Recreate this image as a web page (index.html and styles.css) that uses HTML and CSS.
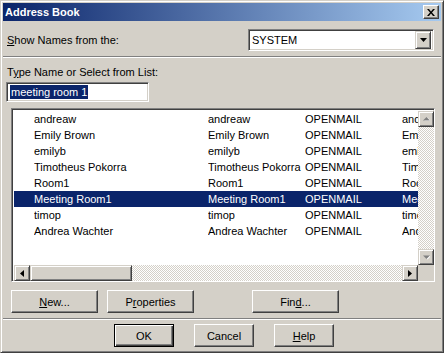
FILE: index.html
```html
<!DOCTYPE html>
<html lang="en">
<head>
    <meta charset="UTF-8">
    <title>Address Book</title>
    <link rel="stylesheet" href="styles.css">
</head>
<body>
    <div class="window">
        <div class="titlebar">
            <span class="title">Address Book</span>
            <span class="close-btn">
                <svg width="8" height="7" viewBox="0 0 8 7"><path d="M0 0h2l2 2.4L6 0h2L5 3.5 8 7H6L4 4.6 2 7H0l3-3.5z" fill="#000"/></svg>
            </span>
        </div>
        <div class="content">
            <div class="source-row">
                <span class="label"><u>S</u>how Names from the:</span>
                <div class="combo">
                    <span class="combo-value">SYSTEM</span>
                    <span class="combo-btn raised">
                        <svg width="7" height="4" viewBox="0 0 7 4"><path d="M0 0h7L3.5 4z" fill="#000"/></svg>
                    </span>
                </div>
            </div>
            <div class="etched"></div>
            <div class="search">
                <span class="label">T<u>y</u>pe Name or Select from List:</span>
                <div class="textbox sunken"><span class="sel">meeting room 1</span></div>
            </div>
            <div class="listbox sunken">
                <div class="rows">
                    <div class="row"><span>andreaw</span><span>andreaw</span><span>OPENMAIL</span><span>andreaw</span></div>
                    <div class="row"><span>Emily Brown</span><span>Emily Brown</span><span>OPENMAIL</span><span>Emily Brown</span></div>
                    <div class="row"><span>emilyb</span><span>emilyb</span><span>OPENMAIL</span><span>emilyb</span></div>
                    <div class="row"><span>Timotheus Pokorra</span><span>Timotheus Pokorra</span><span>OPENMAIL</span><span>Timotheus Pokorra</span></div>
                    <div class="row"><span>Room1</span><span>Room1</span><span>OPENMAIL</span><span>Room1</span></div>
                    <div class="row selected"><span>Meeting Room1</span><span>Meeting Room1</span><span>OPENMAIL</span><span>Meeting Room1</span></div>
                    <div class="row"><span>timop</span><span>timop</span><span>OPENMAIL</span><span>timop</span></div>
                    <div class="row"><span>Andrea Wachter</span><span>Andrea Wachter</span><span>OPENMAIL</span><span>Andrea Wachter</span></div>
                </div>
                <div class="vscroll">
                    <span class="arrow raised">
                        <svg width="7" height="5" viewBox="0 0 7 5"><path d="M1 4h7L4.5 0.5z" fill="#fff"/><path d="M0 3.5h7L3.5 0z" fill="#808080"/></svg>
                    </span>
                    <span class="track"></span>
                    <span class="arrow raised">
                        <svg width="7" height="5" viewBox="0 0 7 5"><path d="M1 1h7L4.5 4.5z" fill="#fff"/><path d="M0 0.5h7L3.5 4z" fill="#808080"/></svg>
                    </span>
                </div>
                <div class="hscroll">
                    <span class="arrow raised">
                        <svg width="4" height="7" viewBox="0 0 4 7"><path d="M4 0v7L0 3.5z" fill="#000"/></svg>
                    </span>
                    <span class="thumb raised"></span>
                    <span class="track"></span>
                    <span class="arrow raised">
                        <svg width="4" height="7" viewBox="0 0 4 7"><path d="M0 0v7L4 3.5z" fill="#000"/></svg>
                    </span>
                </div>
                <div class="corner"></div>
            </div>
            <div class="actions">
                <button class="btn btn-wide"><u>N</u>ew...</button>
                <button class="btn btn-wide">P<u>r</u>operties</button>
                <button class="btn btn-wide btn-find">Fin<u>d</u>...</button>
            </div>
            <div class="etched"></div>
            <div class="dialog-buttons">
                <button class="btn btn-default">OK</button>
                <button class="btn">Cancel</button>
                <button class="btn"><u>H</u>elp</button>
            </div>
        </div>
    </div>
</body>
</html>
```

FILE: styles.css
```css
body {
    margin: 0;
    font-family: 'Liberation Sans', Arial, sans-serif;
    font-size: 11px;
    color: #000;
    background-color: #d4d0c8;
}

.window {
    width: 444px;
    height: 353px;
    box-sizing: border-box;
    padding: 2px;
    background-color: #d4d0c8;
    border: 1px solid;
    border-color: #d4d0c8 #404040 #404040 #d4d0c8;
    box-shadow: inset 1px 1px #fff, inset -1px -1px #808080;
}

.titlebar {
    height: 18px;
    display: flex;
    align-items: center;
    justify-content: space-between;
    padding: 0 2px;
    background: linear-gradient(to right, #0a246a, #a6caf0);
}

.title {
    color: #fff;
    font-weight: bold;
    font-size: 11px;
}

.raised {
    box-sizing: border-box;
    background-color: #d4d0c8;
    border: 1px solid;
    border-color: #d4d0c8 #404040 #404040 #d4d0c8;
    box-shadow: inset 1px 1px #fff, inset -1px -1px #808080;
}

.sunken {
    box-sizing: border-box;
    border: 1px solid;
    border-color: #808080 #fff #fff #808080;
    box-shadow: inset 1px 1px #404040, inset -1px -1px #d4d0c8;
}

.close-btn {
    width: 16px;
    height: 14px;
    box-sizing: border-box;
    display: flex;
    align-items: center;
    justify-content: center;
    background-color: #d4d0c8;
    border: 1px solid;
    border-color: #fff #404040 #404040 #fff;
    box-shadow: inset -1px -1px #808080;
}

.content {
    display: flex;
    flex-direction: column;
}

.label {
    line-height: 13px;
}

.source-row {
    margin-top: 8px;
    height: 22px;
    display: flex;
    align-items: center;
    justify-content: space-between;
    padding: 0 7px 0 4px;
}

.combo {
    width: 186px;
    height: 22px;
    box-sizing: border-box;
    display: flex;
    align-items: center;
    justify-content: space-between;
    padding: 2px;
    background-color: #fff;
    border: 1px solid;
    border-color: #808080 #fff #fff #808080;
    box-shadow: inset 1px 1px #404040, inset -1px -1px #d4d0c8;
}

.combo-value {
    padding-left: 1px;
}

.combo-btn {
    width: 16px;
    height: 18px;
    display: flex;
    align-items: center;
    justify-content: center;
}

.etched {
    margin-top: 5px;
    border-top: 1px solid #808080;
    border-bottom: 1px solid #fff;
}

.search {
    display: flex;
    flex-direction: column;
    padding-left: 3px;
}

.search .label {
    margin-top: 8px;
    margin-left: 1px;
}

.textbox {
    margin-top: 3px;
    width: 143px;
    height: 20px;
    padding: 2px 0 0 3px;
    background-color: #fff;
}

.sel {
    display: inline-block;
    height: 14px;
    line-height: 14px;
    padding: 0 1px;
    background-color: #0a246a;
    color: #fff;
}

.listbox {
    margin: 6px 0 0 8px;
    width: 424px;
    height: 174px;
    padding: 2px;
    background-color: #fff;
    display: grid;
    grid-template-columns: 404px 16px;
    grid-template-rows: 154px 16px;
}

.rows {
    overflow: hidden;
}

.row {
    display: grid;
    grid-template-columns: 174px 97px 97px 120px;
    padding-left: 20px;
    height: 16px;
    line-height: 16px;
    white-space: nowrap;
}

.row span {
    overflow: hidden;
}

.row.selected {
    background-color: #0a246a;
    color: #fff;
}

.vscroll {
    display: flex;
    flex-direction: column;
}

.hscroll {
    display: flex;
}

.arrow {
    width: 16px;
    height: 16px;
    flex: none;
    display: flex;
    align-items: center;
    justify-content: center;
}

.track {
    flex: 1;
    background: repeating-conic-gradient(#d4d0c8 0 25%, #fff 0 50%) 0 0 / 2px 2px;
}

.thumb {
    width: 102px;
    height: 16px;
    flex: none;
}

.corner {
    background-color: #d4d0c8;
}

.btn {
    height: 23px;
    box-sizing: border-box;
    padding: 0;
    font-family: inherit;
    font-size: 11px;
    color: #000;
    background-color: #d4d0c8;
    border: 1px solid;
    border-color: #fff #404040 #404040 #fff;
    box-shadow: inset -1px -1px #808080;
    border-radius: 0;
}

.actions {
    margin-top: 8px;
    padding-left: 8px;
    display: flex;
    gap: 9px;
}

.btn-wide {
    width: 87px;
}

.btn-find {
    margin-left: 49px;
}

.dialog-buttons {
    margin-top: 4px;
    padding-left: 111px;
    display: flex;
    gap: 20px;
}

.dialog-buttons .btn {
    width: 60px;
}

.btn-default {
    border: 1px solid #000;
    box-shadow: inset 1px 1px #fff, inset -1px -1px #404040, inset -2px -2px #808080;
}
```
